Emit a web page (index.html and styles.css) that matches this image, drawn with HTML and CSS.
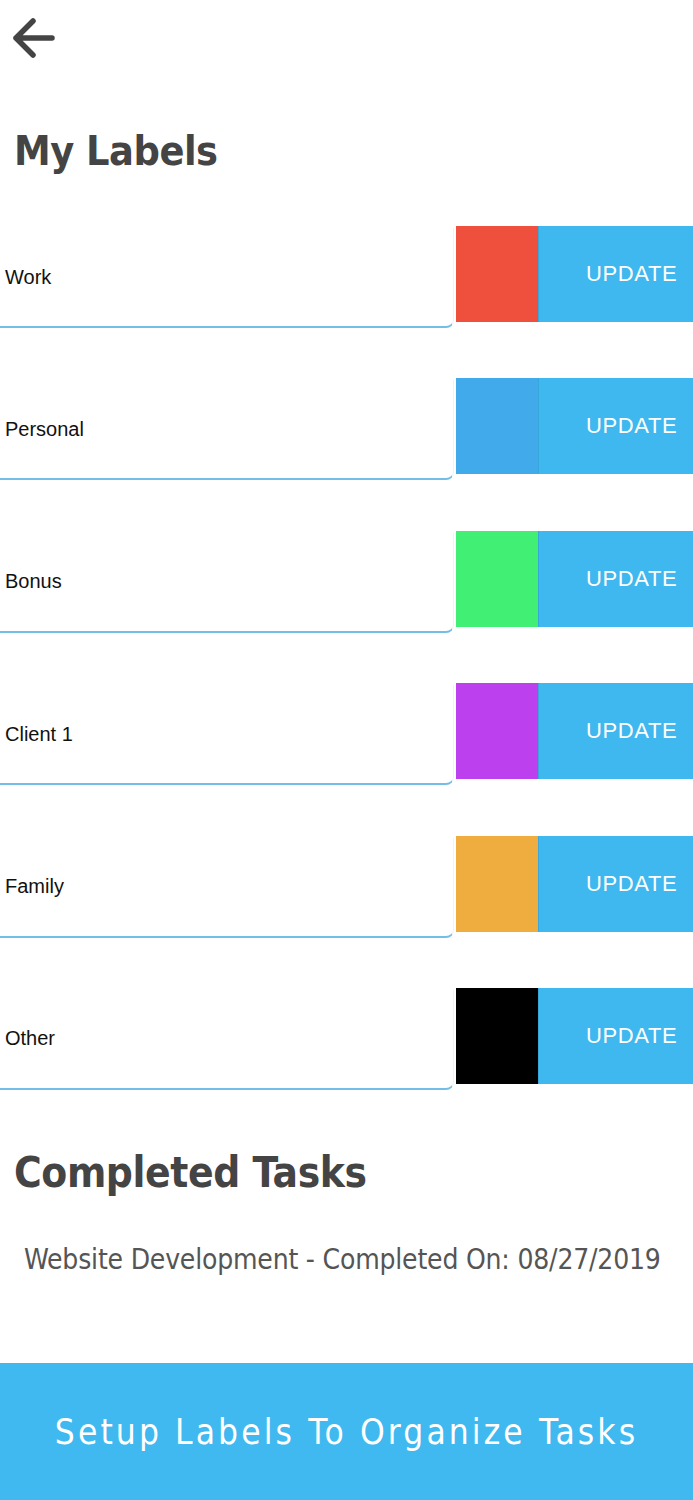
FILE: index.html
```html
<!DOCTYPE html>
<html>
<head>
<meta charset="utf-8">
<link rel="stylesheet" href="styles.css">
</head>
<body>
<div class="page">
  <header class="topbar">
    <svg class="back" width="48" height="48" viewBox="0 0 48 48">
      <path d="M6 24 H42 M23 7 L6 24 L23 41" fill="none" stroke="#444" stroke-width="5.5" stroke-linecap="round" stroke-linejoin="round"/>
    </svg>
  </header>
  <h1 class="title">My Labels</h1>
  <div class="labels">
    <div class="row"><div class="field">Work</div><div class="swatch red"></div><div class="update">UPDATE</div></div>
    <div class="row"><div class="field">Personal</div><div class="swatch blue"></div><div class="update">UPDATE</div></div>
    <div class="row"><div class="field">Bonus</div><div class="swatch green"></div><div class="update">UPDATE</div></div>
    <div class="row"><div class="field">Client 1</div><div class="swatch purple"></div><div class="update">UPDATE</div></div>
    <div class="row"><div class="field">Family</div><div class="swatch orange"></div><div class="update">UPDATE</div></div>
    <div class="row"><div class="field">Other</div><div class="swatch black"></div><div class="update">UPDATE</div></div>
  </div>
  <h2 class="title completed">Completed Tasks</h2>
  <p class="task">Website Development - Completed On: 08/27/2019</p>
  <footer class="footer">Setup Labels To Organize Tasks</footer>
</div>
</body>
</html>
```

FILE: styles.css
```css
* { box-sizing: border-box; }
html, body { margin: 0; padding: 0; background: #fff; }
.page {
  width: 693px;
  height: 1500px;
  display: flex;
  flex-direction: column;
  overflow: hidden;
}
.topbar {
  height: 62px;
  padding: 14px 0 0 10px;
}
.back { display: block; }
.title {
  margin: 65px 0 0 14px;
  font-family: "DejaVu Sans Condensed", "DejaVu Sans", sans-serif;
  font-stretch: condensed;
  font-weight: bold;
  font-size: 41px;
  line-height: 48px;
  color: #444;
  letter-spacing: -0.5px;
}
.labels {
  margin-top: 51px;
  display: flex;
  flex-direction: column;
  gap: 56.4px;
}
.row {
  display: flex;
  height: 96px;
}
.field {
  width: 454px;
  height: 100px;
  margin-top: 2px;
  border-bottom: 2px solid #72bee6;
  border-right: 1px solid #eef4f8;
  border-bottom-right-radius: 8px;
  display: flex;
  align-items: center;
  padding-left: 5px;
  font-family: "Liberation Sans", Arial, sans-serif;
  font-size: 20px;
  color: #111;
}
.swatch {
  width: 82px;
  margin-left: 2px;
}
.red { background: #ef4f3d; }
.blue { background: #40aaea; }
.green { background: #40ef74; }
.purple { background: #bd40ef; }
.orange { background: #efad40; }
.black { background: #000; }
.update {
  flex: 1;
  background: #3eb8ee;
  border-left: 1px solid #36a8dc;
  display: flex;
  align-items: center;
  padding-left: 47px;
  font-family: "Liberation Sans", Arial, sans-serif;
  font-size: 22px;
  letter-spacing: 0.6px;
  color: #fff;
}
.completed {
  margin-top: 65px;
  font-size: 42px;
  letter-spacing: -0.4px;
}
.task {
  margin: 47px 0 0 24px;
  font-family: "DejaVu Sans Condensed", "DejaVu Sans", sans-serif;
  font-stretch: condensed;
  font-size: 28px;
  line-height: 32px;
  color: #555;
  letter-spacing: -0.2px;
}
.footer {
  margin-top: auto;
  height: 137px;
  background: #3fb9ef;
  display: flex;
  align-items: center;
  justify-content: center;
  font-family: "DejaVu Sans Condensed", "DejaVu Sans", sans-serif;
  font-stretch: condensed;
  font-size: 35px;
  color: #fff;
  letter-spacing: 3.1px;
}
```
